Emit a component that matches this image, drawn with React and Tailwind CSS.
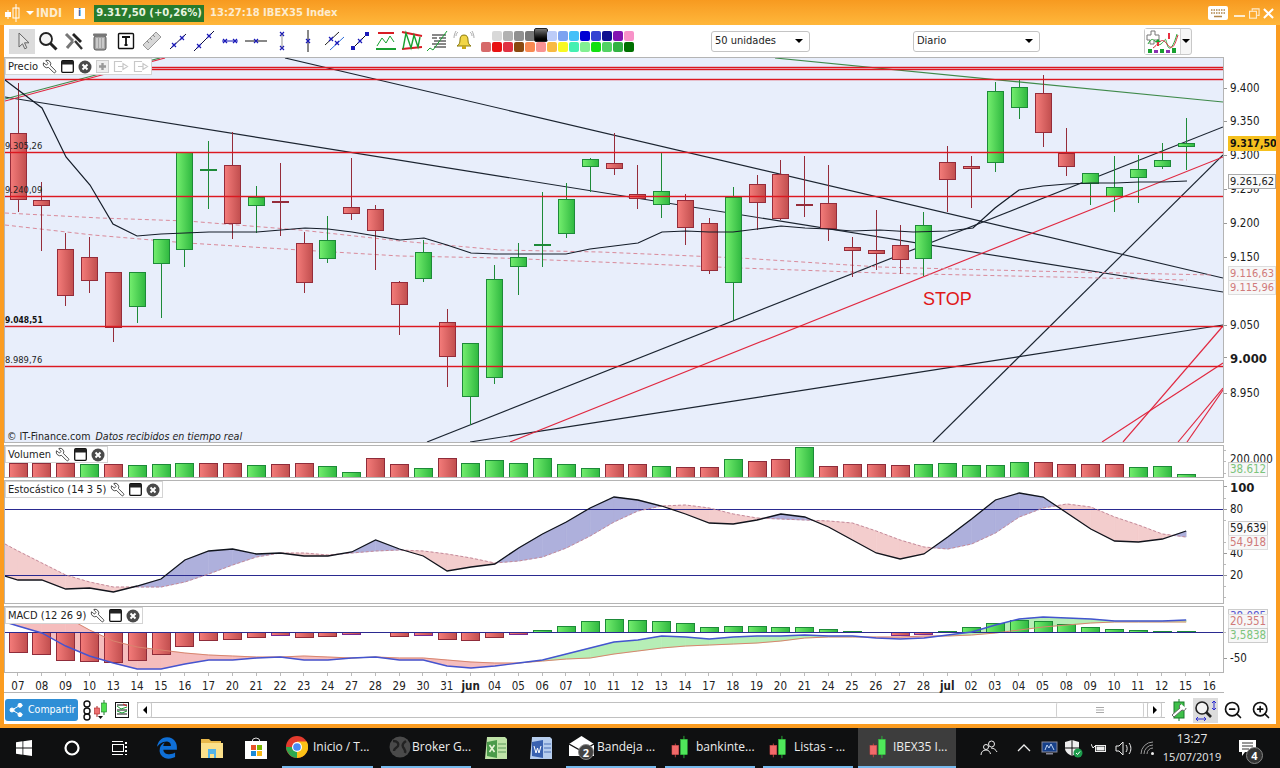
import React from 'react';
import { Wrench, ZoomIn, ZoomOut, Share2 } from 'lucide-react';
import { FaEdgeLegacy } from 'react-icons/fa6';

const xs = i => 18 + 23.84 * i;
const labels = ['07','08','09','10','13','14','15','16','17','20','21','22','23','24','27','28','29','30','31','jun','04','05','06','07','10','11','12','13','14','17','18','19','20','21','24','25','26','27','28','jul','02','03','04','05','08','09','10','11','12','15','16'];

// [color, wickTop, wickBottom, bodyTop, bodyBottom]
const candles = [
['r',83,212,133,199],['r',182,251,200,205],['r',233,306,249,295],['r',237,293,257,280],['r',272,342,272,327],
['g',272,323,272,306],['g',239,318,239,263],['g',152,267,152,249],['g',141,209,169,170],['r',132,239,165,223],
['g',186,233,197,205],['r',163,236,201,202],['r',232,293,243,282],['g',216,263,240,258],['r',158,220,207,213],
['r',205,270,209,230],['r',281,335,282,304],['g',240,282,252,278],['r',309,387,322,356],['g',343,425,343,396],
['g',265,384,279,377],['g',243,295,257,266],['g',192,267,244,245],['g',183,238,199,233],['g',158,192,159,166],
['r',133,175,163,168],['r',165,209,194,198],['g',153,218,191,204],['r',194,245,200,227],['r',218,274,223,270],
['g',187,320,197,282],['r',175,230,184,202],['r',160,220,174,218],['r',156,217,204,205],['r',165,241,203,228],
['r',237,277,247,250],['r',210,270,250,253],['r',225,274,245,259],['g',212,276,225,258],['r',146,212,162,179],
['r',156,208,166,168],['g',82,172,91,162],['g',80,119,87,107],['r',75,147,93,132],['r',128,176,153,166],
['g',173,205,173,183],['g',156,212,187,196],['g',155,203,169,177],['g',143,169,160,166],['g',118,170,143,146],
];
const ma = [[5,80],[42,108],[66,157],[90,185],[113,224],[137,236],[161,234],[185,233],[209,232],[233,232],[257,232],[281,230],[305,228],[328,229],[352,232],[376,236],[400,240],[424,238],[447,245],[471,253],[495,254],[518,254],[542,254],[566,254],[590,249],[614,246],[638,243],[662,232],[686,231],[709,232],[733,232],[757,229],[781,226],[805,228],[828,229],[852,231],[880,230],[913,232],[948,231],[973,228],[995,208],[1019,190],[1043,186],[1067,184],[1091,183],[1115,183],[1139,182],[1163,182],[1187,181]];
const dash1 = [[5,213],[100,218],[187,221],[300,230],[400,241],[500,250],[600,252],[740,258],[880,267],[1030,271],[1213,275]];
const dash2 = [[5,225],[93,235],[187,243],[300,250],[400,256],[500,258],[600,262],[740,268],[880,273],[1187,280]];
const hLines = [67,69,79,152,196,326,366];
const segs = [
['#1b2430',285,58,1223,278],['#1b2430',5,97,1223,292],['#1b2430',427,442,1223,127],['#1b2430',470,442,1223,325],['#1b2430',933,442,1223,155],
['#e02840',510,442,1223,157],['#3f8a4a',775,58,1223,102],['#3f8a4a',5,99,160,58],['#e02840',5,101,165,58],
['#e02840',1123,442,1223,326],['#e02840',1102,442,1223,363],['#e02840',1178,442,1223,388],['#e02840',1187,442,1223,390],
];
const volTop = [463,463,463,464,464,465,464,463,463,463,465,464,463,466,472,458,464,468,458,463,460,463,458,464,468,464,464,466,467,467,459,461,459,447,466,464,464,465,464,463,465,465,462,462,464,464,464,467,466,474];
const volCol = 'rrrgrgggrrgrrggrrgrggggggrrgrrgrrgrrrrgggggrrrrggg'.split('');
const macdBars = [652,654,660,661,662,660,654,646,640,639,637,635,637,636,634,632,636,635,639,640,637,634,630,626,621,619,620,621,623,627,626,626,627,627,629,631,632,635,634,631,627,623,620,621,624,627,629,630,631,631];
const kLine = [580,580,589,588,592,586,579,560,551,549,554,553,556,556,552,540,549,556,571,567,564,548,534,522,508,497,500,506,514,523,524,520,514,517,527,540,553,559,554,537,519,500,493,497,513,529,541,542,539,531];
const dLine = [551,563,575,582,587,587,587,582,574,565,557,553,553,555,553,551,550,551,554,558,563,561,557,548,536,522,511,506,505,508,514,518,519,520,521,523,531,540,547,549,544,533,517,508,504,507,517,525,534,537];
const macdLine = [626,633,646,656,663,669,669,664,660,660,658,657,660,660,658,657,660,660,666,668,666,663,660,654,648,642,640,636,637,639,637,636,636,635,636,636,638,639,638,635,632,625,619,617,618,619,621,621,621,620];
const sigLine = [600,606,617,630,641,647,650,653,655,656,657,657,656,657,658,657,658,658,660,662,663,663,661,659,658,654,651,648,646,645,644,643,641,638,637,637,637,637,636,636,635,633,630,627,625,623,622,622,622,622];

const withLead = (arr, lead) => [[5, lead], ...arr.map((y, i) => [xs(i), y])];
const pts = a => a.map(p => p.join(',')).join(' ');

function bandPolys(a, b, colA, colB) {
  const out = [];
  for (let i = 0; i < a.length - 1; i++) {
    const [x0, a0] = a[i], [x1, a1] = a[i + 1];
    const b0 = b[i][1], b1 = b[i + 1][1];
    const d0 = a0 - b0, d1 = a1 - b1;
    if (d0 * d1 >= 0) {
      out.push([`${x0},${a0} ${x1},${a1} ${x1},${b1} ${x0},${b0}`, d0 + d1 < 0 ? colA : colB]);
    } else {
      const t = d0 / (d0 - d1), xc = x0 + (x1 - x0) * t, yc = a0 + (a1 - a0) * t;
      out.push([`${x0},${a0} ${xc},${yc} ${x0},${b0}`, d0 < 0 ? colA : colB]);
      out.push([`${xc},${yc} ${x1},${a1} ${x1},${b1}`, d1 < 0 ? colA : colB]);
    }
  }
  return out;
}

const Defs = () => (
  <defs>
    <linearGradient id="gg" x1="0" x2="1" y1="0" y2="0"><stop offset="0" stopColor="#74ee6e" /><stop offset="1" stopColor="#2fb840" /></linearGradient>
    <linearGradient id="gr" x1="0" x2="1" y1="0" y2="0"><stop offset="0" stopColor="#f47c7a" /><stop offset="1" stopColor="#c14e4e" /></linearGradient>
  </defs>
);

function PriceChart() {
  return (
    <svg width="1218" height="384" viewBox="5 58 1218 384" className="block">
      <Defs />
      {segs.map((s, i) => <line key={i} x1={s[1]} y1={s[2]} x2={s[3]} y2={s[4]} stroke={s[0]} strokeWidth="1.150" />)}
      <polyline points={pts(dash1)} fill="none" stroke="#d98a9a" strokeDasharray="4 3" />
      <polyline points={pts(dash2)} fill="none" stroke="#d98a9a" strokeDasharray="4 3" />
      {candles.map((c, i) => {
        const x = Math.floor(xs(i));
        const g = c[0] === 'g';
        const line = g ? '#1d8a38' : '#952c3a';
        return (
          <g key={i} shapeRendering="crispEdges">
            <line x1={x + .5} x2={x + .5} y1={c[1]} y2={c[2]} stroke={line} />
            {c[4] - c[3] < 2
              ? <rect x={x - 8} y={c[3]} width="17" height="2" fill={line} />
              : <rect x={x - 8 + .5} y={c[3] + .5} width="16" height={c[4] - c[3]} fill={g ? 'url(#gg)' : 'url(#gr)'} stroke={line} />}
          </g>
        );
      })}
      {hLines.map(y => (
        <g key={y} shapeRendering="crispEdges">
          <line x1="5" x2="1223" y1={y + .5} y2={y + .5} stroke="#dc1820" strokeOpacity=".22" strokeWidth="3" />
          <line x1="5" x2="1223" y1={y + .5} y2={y + .5} stroke="#dc1820" />
        </g>
      ))}
      <polyline points={pts(ma)} fill="none" stroke="#141c28" strokeWidth="1.200" />
    </svg>
  );
}

function VolumeChart() {
  return (
    <svg width="1218" height="31" viewBox="5 446 1218 31" className="block">
      <Defs />
      {volTop.map((t, i) => {
        const x = Math.floor(xs(i));
        const g = volCol[i] === 'g';
        return <rect key={i} shapeRendering="crispEdges" x={x - 9 + .5} y={t + .5} width="18" height={480 - t} fill={g ? 'url(#gg)' : 'url(#gr)'} stroke={g ? '#1d8a38' : '#8f2c3a'} />;
      })}
    </svg>
  );
}

function StochChart() {
  const k = withLead(kLine, 576), d = withLead(dLine, 544);
  return (
    <svg width="1218" height="122" viewBox="5 481 1218 122" className="block">
      {bandPolys(d, k, '#f3cdcd', '#aeb0dc').map((p, i) => <polygon key={i} points={p[0]} fill={p[1]} stroke={p[1]} strokeWidth=".6" />)}
      <line x1="5" x2="1223" y1="509.5" y2="509.5" stroke="#2a2a90" shapeRendering="crispEdges" />
      <line x1="5" x2="1223" y1="575.5" y2="575.5" stroke="#2a2a90" shapeRendering="crispEdges" />
      <polyline points={pts(d)} fill="none" stroke="#c48a9a" strokeDasharray="3 2" />
      <polyline points={pts(k)} fill="none" stroke="#10141c" strokeWidth="1.300" />
    </svg>
  );
}

function MacdChart() {
  const m = withLead(macdLine, 622), s = withLead(sigLine, 596);
  return (
    <svg width="1218" height="65" viewBox="5 607 1218 65" className="block">
      <Defs />
      {bandPolys(s, m, '#f5bdbd', '#b6eeb6').map((p, i) => <polygon key={i} points={p[0]} fill={p[1]} stroke={p[1]} strokeWidth=".6" />)}
      {macdBars.map((t, i) => {
        const x = Math.floor(xs(i));
        if (t === 632) return null;
        const up = t < 632;
        const small = !up && t <= 635;
        const y = up ? t : 632;
        const h = Math.abs(t - 632);
        return <rect key={i} shapeRendering="crispEdges" x={x - 9 + .5} y={y + .5} width="18" height={h} fill={up ? 'url(#gg)' : 'url(#gr)'} stroke={up ? '#1d8a38' : small ? '#7a2a90' : '#8f2c3a'} />;
      })}
      <polyline points={pts(s)} fill="none" stroke="#d8856e" />
      <line x1="5" x2="1223" y1="632.5" y2="632.5" stroke="#2a2a90" shapeRendering="crispEdges" />
      <polyline points={pts(m)} fill="none" stroke="#4454d0" strokeWidth="1.400" />
    </svg>
  );
}

const WindowGlyph = () => (
  <svg width="13" height="13" viewBox="0 0 13 13" className="shrink-0"><rect x=".7" y=".7" width="11.600" height="11.600" rx="1" fill="#fff" stroke="#111" strokeWidth="1.300" /><rect x="1" y="1" width="11" height="3.500" fill="#222" /></svg>
);
const CloseGlyph = () => (
  <svg width="14" height="14" viewBox="0 0 14 14" className="shrink-0"><circle cx="7" cy="7" r="6.500" fill="#4a4a4a" /><path d="M4.500 4.500l5 5M9.500 4.500l-5 5" stroke="#fff" strokeWidth="2" /></svg>
);
function Legend({ name, extra, className }) {
  return (
    <div className={`absolute left-0 top-0 flex items-center gap-[4px] bg-white border border-[#d4d4d4] pl-[2px] pr-[2px] text-[11px] leading-none text-[#222] whitespace-nowrap ${className}`}>
      <span>{name}</span>
      <Wrench size={15} strokeWidth={1.200} color="#111" className="-scale-x-100 shrink-0" />
      <WindowGlyph />
      <CloseGlyph />
      {extra}
    </div>
  );
}
const PrecioExtra = () => (
  <>
    <svg width="13" height="13" viewBox="0 0 13 13"><rect x=".5" y=".5" width="12" height="12" fill="#eee" stroke="#ccc" /><path d="M6.500 3v7M3 6.500h7" stroke="#999" strokeWidth="2.400" /></svg>
    {[0, 1].map(i => (
      <svg key={i} width="16" height="13" viewBox="0 0 16 13"><path d="M9 1.500H1.500v10H9M5 6.500h5M10 3.500v6l4.500-3z" fill="none" stroke="#c8c8c8" strokeWidth="1.200" /></svg>
    ))}
  </>
);

function AxisText({ y, top, children, bold, tick = true }) {
  return (
    <>
      {tick && <div className="absolute left-0 w-[3px] h-px bg-[#999]" style={{ top: y - top }} />}
      <div className={`absolute left-[6px] -translate-y-1/2 whitespace-nowrap leading-none ${bold ? 'font-bold text-[13px]' : 'text-[11.5px]'} text-[#1c1c1c]`} style={{ top: y - top + 1 }}>{children}</div>
    </>
  );
}
function AxisBox({ y, top, children, className }) {
  return (
    <div className={`absolute left-[4px] h-[15px] px-[1px] flex items-center border leading-none whitespace-nowrap ${className}`} style={{ top: y - top }}>{children}</div>
  );
}
const MinorTicks = ({ list, top }) => list.map(y => <div key={y} className="absolute left-0 w-[2px] h-px bg-[#bbb]" style={{ top: y - top }} />);

function ChartText({ x, y, className, children }) {
  return <div className={`absolute -translate-y-1/2 whitespace-nowrap leading-none ${className}`} style={{ left: x - 5, top: y - 58 }}>{children}</div>;
}

function Pane({ h, children, axis, legend }) {
  return (
    <div className="flex shrink-0">
      <div className="relative w-[1220px] border border-[#b4b4b4] overflow-hidden">{children}{legend}</div>
      <div className="relative w-[52px] overflow-hidden" style={{ height: h }}>{axis}</div>
    </div>
  );
}

const Xm = ({ x, y, s = 2, c = '#1a1ab8' }) => <path d={`M${x - s} ${y - s}l${2 * s} ${2 * s}M${x + s} ${y - s}l${-2 * s} ${2 * s}`} stroke={c} strokeWidth="1.200" fill="none" />;
const Tool = ({ children, active }) => (
  <div className={`w-[26px] h-[25px] flex items-center justify-center shrink-0 ${active ? 'bg-[#dcdcdc]' : ''}`}>
    <svg width="22" height="22" viewBox="0 0 22 22">{children}</svg>
  </div>
);

function ToolbarIcons() {
  return (
    <>
      <Tool active><path d="M8 3v14l3.500-3.200 2.300 5 2-1-2.300-5H18z" fill="#e4e4e4" stroke="#666" /></Tool>
      <Tool><circle cx="9" cy="9" r="6" fill="#f4f4f4" stroke="#222" strokeWidth="1.800" /><path d="M13.500 13.500l6 6" stroke="#222" strokeWidth="3" /></Tool>
      <Tool><path d="M3 4l7 7M10 11l-6 7" stroke="#777" strokeWidth="3" /><path d="M11 3l8 8-2 2-8-8z" fill="#222" /><path d="M12 11l7 8" stroke="#333" strokeWidth="2.400" /></Tool>
      <Tool><rect x="5" y="6" width="12" height="14" rx="2" fill="#a4a4a4" stroke="#555" /><path d="M8 8v10M11 8v10M14 8v10" stroke="#eee" /><rect x="4" y="3.500" width="14" height="2.500" rx="1" fill="#777" /></Tool>
      <Tool><rect x="3.500" y="3.500" width="15" height="15" rx="1" fill="#fff" stroke="#111" strokeWidth="1.400" /><path d="M7 7h8M11 7v8M9.500 15h3" stroke="#111" strokeWidth="1.800" /></Tool>
      <Tool><path d="M2 15L15 2l5 5L7 20z" fill="#d8d8d8" stroke="#999" /><path d="M6 11l2 2M9 8l2 2M12 5l2 2" stroke="#888" /></Tool>
      <Tool><path d="M3 19L19 4" stroke="#101040" /><Xm x={7} y={15} /><Xm x={15} y={8} /></Tool>
      <Tool><path d="M1 21L21 1" stroke="#101040" /><Xm x={6} y={16} /><Xm x={16} y={6} /></Tool>
      <Tool><Xm x={6} y={11} /><Xm x={16} y={11} /><path d="M3 11h16" stroke="#1a1ab8" /></Tool>
      <Tool><path d="M0 11h22" stroke="#111" /><Xm x={11} y={11} /></Tool>
      <Tool><Xm x={11} y={4} /><Xm x={11} y={18} /><path d="M11 4v14" stroke="#666" strokeWidth=".7" /></Tool>
      <Tool><path d="M11 0v22" stroke="#111" /><Xm x={11} y={11} /></Tool>
      <Tool><path d="M2 15L16 2" stroke="#222" /><path d="M7 20L21 7" stroke="#2a6ad8" /><Xm x={8} y={9} /><Xm x={14} y={13} /></Tool>
      <Tool><path d="M4 18L18 4" stroke="#111" /><rect x="2" y="16" width="4" height="4" fill="#1a1ab8" /><rect x="16" y="2" width="4" height="4" fill="#1a1ab8" /><Xm x={11} y={11} /></Tool>
      <Tool><rect x="3" y="2" width="16" height="2" fill="#d81c24" /><rect x="1" y="18" width="20" height="2" fill="#18a030" /><path d="M2 16l5-8 4 5 4-7 4 6" fill="none" stroke="#18a030" /></Tool>
      <Tool><path d="M1 2l20 4M1 19l20-2" stroke="#d81c24" strokeWidth="2" /><path d="M2 19L5 3l5 15 3-13 4 12 2-10" fill="none" stroke="#18a030" strokeWidth="1.400" /></Tool>
      <Tool><path d="M5 5h14M5 8h5M12 8h7M7 11h12M5 14h14M7 17h12" stroke="#111" /><path d="M0 21l3-3 3 2 14-19" fill="none" stroke="#18a030" /></Tool>
      <Tool><path d="M11 5c-3 0-4 2-4 5 0 3-1 5-3 6h14c-2-1-3-3-3-6 0-3-1-5-4-5z" fill="#f2d648" stroke="#8a7a10" /><rect x="9" y="16" width="4" height="3" fill="#c8a818" /><path d="M3 6c0-2 1-3 2-4M19 6c0-2-1-3-2-4M1 8c0-3 1-5 2-7M21 8c0-3-1-5-2-7" stroke="#888" fill="none" strokeWidth=".7" /></Tool>
    </>
  );
}

const top = ['#d8d8d8', '#b2b2b2', '#909090', '#787878', '#000', '#bcccf8', '#7ca2f0', '#44c0f8', '#0000d4', '#3442d2', '#0e0e90', '#8212b2', '#f892c8'];
const bot = ['#d66a6a', '#e81212', '#e03242', '#8a4a10', '#f88a52', '#f89292', '#f8ba42', '#f8f822', '#44f0b2', '#82f092', '#12e012', '#52d262', '#32b242', '#007000'];
function Palette() {
  return (
    <div className="ml-[3px] w-[154px] shrink-0 flex flex-col gap-[1px]">
      <div className="flex pl-[11px]">
        {top.map((c, i) => (
          <div key={i} className="relative w-[11px] h-[10px] flex justify-center">
            {i === 4
              ? <div className="absolute -top-[3px] w-[14px] h-[14px] rounded-[2px] border border-[#222] bg-linear-to-b from-[#777] to-black" />
              : <div className="w-[10px] h-[10px] rounded-[2px]" style={{ background: c }} />}
          </div>
        ))}
      </div>
      <div className="flex">
        {bot.map((c, i) => <div key={i} className="w-[11px] h-[10px] flex justify-center"><div className="w-[10px] h-[10px] rounded-[2px]" style={{ background: c }} /></div>)}
      </div>
    </div>
  );
}
function Select({ label, className }) {
  return (
    <div className={`h-[21px] shrink-0 flex items-center justify-between px-[3px] pr-[6px] bg-white border border-[#c4c4c4] rounded-[3px] text-[11px] text-[#222] ${className}`}>
      <span className="pt-[1px]">{label}</span>
      <span className="w-0 h-0 border-x-[4px] border-x-transparent border-t-[4px] border-t-black" />
    </div>
  );
}

function Candle() {
  return (
    <svg width="21" height="24" viewBox="0 0 22 28" className="shrink-0">
      <path d="M5 10v16" stroke="#c44" /><rect x="1" y="12" width="8" height="11" fill="#f26a6a" stroke="#c44" strokeWidth=".5" />
      <path d="M15 1v26" stroke="#2bbf3a" /><rect x="11" y="5" width="8" height="18" fill="#4fe85a" stroke="#2bbf3a" strokeWidth=".5" />
    </svg>
  );
}
const TaskItem = ({ icon, label, className }) => (
  <div className={`flex items-center h-full shrink-0 border-b-2 border-[#76b9ed] ${className}`}>
    {icon}
    <span className="text-[12px] text-[#ededed] whitespace-nowrap">{label}</span>
  </div>
);

function Taskbar() {
  return (
    <div className="h-[40px] shrink-0 bg-[#0f1011] flex items-stretch font-['Open_Sans',sans-serif]">
      <div className="w-[48px] shrink-0 flex items-center justify-center">
        <svg width="16" height="16" viewBox="0 0 16 16" fill="#fff"><path d="M0 2.200l6.500-.9v6.300H0zM7.300 1.200L16 0v7.600H7.300zM0 8.400h6.500v6.300L0 13.800zM7.300 8.400H16V16l-8.700-1.200z" /></svg>
      </div>
      <div className="w-[48px] shrink-0 flex items-center justify-center">
        <svg width="16" height="16" viewBox="0 0 16 16"><circle cx="8" cy="8" r="6.500" fill="none" stroke="#fff" strokeWidth="2.200" /></svg>
      </div>
      <div className="w-[48px] shrink-0 flex items-center justify-center">
        <svg width="17" height="15" viewBox="0 0 17 15" fill="none" stroke="#fff"><rect x=".5" y="3.500" width="11" height="7" /><path d="M0 .5h11M0 13.500h11" /><path d="M14 1v2M14 5v2M14 9v2M14 13v1" strokeWidth="2" /></svg>
      </div>
      <div className="w-[46px] shrink-0 flex items-center justify-center"><FaEdgeLegacy size={22} color="#0f6fd6" /></div>
      <div className="w-[44px] shrink-0 flex items-center justify-center">
        <svg width="22" height="20" viewBox="0 0 22 20"><path d="M0 1h8l2 2h10v3H0z" fill="#e8b84a" /><rect x="0" y="5" width="22" height="15" fill="#fbe08a" /><rect x="7" y="11" width="8" height="5" fill="#54b4e8" /><path d="M8 16v4M14 16v4" stroke="#54b4e8" strokeWidth="2" /></svg>
      </div>
      <div className="w-[44px] shrink-0 flex items-center justify-center">
        <svg width="24" height="24" viewBox="0 0 24 24"><path d="M8 6a4 4 0 018 0" fill="none" stroke="#ddd" /><rect x="1" y="5" width="22" height="18" fill="#fff" /><rect x="7" y="9" width="5" height="5" fill="#e8542a" /><rect x="13" y="9" width="5" height="5" fill="#7ab800" /><rect x="7" y="15" width="5" height="5" fill="#1a8ad8" /><rect x="13" y="15" width="5" height="5" fill="#f8b818" /></svg>
      </div>
      <TaskItem className="w-[91px] ml-[4px] pl-[4px] gap-[5px]" label="Inicio / T..." icon={
        <svg width="22" height="22" viewBox="0 0 24 24" className="shrink-0"><circle cx="12" cy="12" r="12" fill="#e33b2e" /><path d="M12 12L2 18A12 12 0 0012 24z" fill="#2da94f" /><path d="M12 12l-10 6A12 12 0 010 12z" fill="#2da94f" /><path d="M12 6h10.500A12 12 0 0112 24z" fill="#fbc116" /><circle cx="12" cy="12" r="5.500" fill="#fff" /><circle cx="12" cy="12" r="4.200" fill="#4a8af4" /></svg>} />
      <TaskItem className="w-[90px] ml-[8px] pl-[8px] gap-[1px]" label="Broker G..." icon={
        <svg width="22" height="22" viewBox="0 0 22 22" className="shrink-0"><circle cx="11" cy="11" r="10.500" fill="#4a4a4a" /><path d="M4 5c5 0 6 3 5 5s-4 2-4 5M17 5c-3 2-4 4-3 6s3 3 2 6" fill="none" stroke="#222" strokeWidth="2.400" /></svg>} />
      <div className="w-[44px] ml-[2px] shrink-0 flex items-center justify-center">
        <svg width="23" height="23" viewBox="0 0 23 23"><path d="M3 0h18l2 2v20H1z" fill="#bfe3a8" /><path d="M3 5l10-2v18L3 19z" fill="#4a9a4a" /><path d="M5.500 8l5 7M10.500 8l-5 7" stroke="#e8f4d8" strokeWidth="1.600" /><path d="M14 7h8M14 11h8M14 15h8" stroke="#5a9a5a" /></svg>
      </div>
      <div className="w-[44px] ml-[1px] shrink-0 flex items-center justify-center">
        <svg width="23" height="23" viewBox="0 0 23 23"><path d="M3 0h18l2 2v20H1z" fill="#b6cdee" /><path d="M3 5l11-2v18L3 19z" fill="#3a62b0" /><path d="M5 9l2 7 1.500-5 1.500 5 2-7" fill="none" stroke="#fff" /><path d="M15 7h7M15 11h7M15 15h7" stroke="#4a70b8" /></svg>
      </div>
      <TaskItem className="w-[90px] ml-[4px] pl-[3px] gap-[3px]" label="Bandeja ..." icon={
        <div className="relative flex shrink-0">
          <svg width="25" height="22" viewBox="0 0 25 22"><path d="M0 8L12.500 0 25 8v12H0z" fill="#fff" /><path d="M0 8l12.500 7L25 8" fill="none" stroke="#111" strokeWidth="1.400" /></svg>
          <span className="absolute left-[9px] top-[8px] w-[16px] h-[16px] rounded-full bg-[#444] border border-[#888] text-white text-[11px] font-bold leading-none flex items-center justify-center">2</span>
        </div>} />
      <TaskItem className="w-[90px] ml-[9px] pl-[5px] gap-[5px]" label="bankinte..." icon={<Candle />} />
      <TaskItem className="w-[90px] ml-[8px] pl-[5px] gap-[5px]" label="Listas - ..." icon={<Candle />} />
      <TaskItem className="w-[98px] ml-[5px] pl-[10px] gap-[4px] bg-[#3d3d3d]" label="IBEX35 I..." icon={<Candle />} />
      <div className="w-[66px] shrink-0 flex items-center justify-center">
        <svg width="18" height="18" viewBox="0 0 18 18" fill="none" stroke="#eee"><circle cx="11.500" cy="5" r="3" /><circle cx="6" cy="8" r="2.500" /><path d="M1 16c0-3 2-5 5-5s4 2 4.500 4M11 9c3 0 5 2 6 4" /></svg>
      </div>
      <div className="-ml-[11px] w-[26px] shrink-0 flex items-center justify-center">
        <svg width="14" height="8" viewBox="0 0 14 8" fill="none" stroke="#eee" strokeWidth="1.300"><path d="M1 7l6-6 6 6" /></svg>
      </div>
      <div className="w-[24px] shrink-0 flex items-center justify-center"><svg width="17" height="15" viewBox="0 0 17 15"><rect x="1" y="1" width="15" height="10" fill="#16408a" stroke="#889" /><path d="M4 9l2-5 2 3 2-4 3 6" fill="none" stroke="#bfd4f4" /><rect x="5" y="12" width="7" height="1.500" fill="#889" /></svg></div>
      <div className="w-[25px] shrink-0 flex items-center justify-center"><svg width="18" height="19" viewBox="0 0 18 19"><path d="M7 1l7 2v6c0 4-3 6-7 8-4-2-7-4-7-8V3z" fill="#eee" /><path d="M7 1v16M0 9h14" stroke="#111" /><circle cx="13" cy="14" r="4.500" fill="#1c9c4c" /><path d="M11 14l1.500 1.500 2.500-3" fill="none" stroke="#fff" /></svg></div>
      <div className="w-[25px] shrink-0 flex items-center justify-center"><svg width="16" height="12" viewBox="0 0 16 12" fill="none" stroke="#eee"><rect x="4.500" y="3.500" width="10" height="6" /><path d="M0 2l2 4 2-2" /><rect x="6" y="5" width="7" height="3" fill="#eee" /></svg></div>
      <div className="w-[24px] shrink-0 flex items-center justify-center"><svg width="17" height="15" viewBox="0 0 17 15" fill="none" stroke="#eee"><path d="M1 5h3l4-4v13l-4-4H1zM11 4c1.500 2 1.500 5 0 7M14 2c2.500 3 2.500 8 0 11" /></svg></div>
      <div className="w-[25px] shrink-0 flex items-center justify-center"><svg width="15" height="14" viewBox="0 0 15 14" fill="none" stroke="#999"><path d="M1 13a12 12 0 0112-12M4 13a9 9 0 019-9M7 13a6 6 0 016-6" /><circle cx="12.500" cy="12.500" r="1.500" fill="#eee" stroke="none" /></svg></div>
      <div className="w-[64px] shrink-0 flex flex-col items-center justify-center text-[11px] leading-[18px] text-[#e8e8e8]">
        <span className="text-[12px]">13:27</span>
        <span>15/07/2019</span>
      </div>
      <div className="ml-[15px] relative w-[28px] shrink-0 pt-[12px]">
        <svg width="17" height="16" viewBox="0 0 17 16" className="block"><path d="M0 0h17v12H6l-3 4v-4H0z" fill="#fff" /><path d="M3 3h11M3 6h11M3 9h7" stroke="#333" /></svg>
        <span className="absolute left-[7px] top-[19px] w-[17px] h-[17px] rounded-full bg-[#333] border border-[#888] text-white text-[11px] font-bold leading-none flex items-center justify-center">4</span>
      </div>
    </div>
  );
}

export default function App() {
  return (
    <div className="w-[1280px] h-[768px] flex flex-col overflow-hidden font-['DejaVu_Sans_Condensed','Noto_Sans',sans-serif] bg-[#0f1011]">
      <div className="h-[728px] shrink-0 flex flex-col bg-[#fb9c20]">
        {/* Title bar */}
        <div className="h-[25px] shrink-0 flex items-center pl-[5px] pr-[6px] pt-[1px] bg-linear-to-b from-[#f79a20] to-[#ffb73a] text-[#fdeccf] font-bold text-[12px]">
          <svg width="16" height="18" viewBox="0 0 16 18" className="shrink-0"><path d="M3 6v9" stroke="#fff" /><rect x="0" y="8" width="6" height="5" fill="#fff" /><path d="M11 0v18" stroke="#fff" /><rect x="8" y="4" width="6" height="10" fill="none" stroke="#fff" /></svg>
          <span className="ml-[5px] w-0 h-0 border-x-[4px] border-x-transparent border-t-[4px] border-t-white shrink-0" />
          <span className="ml-[2px] w-[38px]">INDI</span>
          <span className="w-[11px] h-[11px] bg-white flex items-center justify-center text-[#3a6ca8] text-[10px] leading-none font-bold shrink-0">i</span>
          <span className="ml-[9px] w-[110px] h-[17px] bg-[#287a2c] text-[#e8f4e0] text-[11.2px] leading-none flex items-center justify-center whitespace-nowrap shrink-0">9.317,50 (+0,26%)</span>
          <span className="ml-[6px] text-[11.1px] whitespace-nowrap">13:27:18 IBEX35 Index</span>
          <div className="ml-auto flex items-center">
            <svg width="20" height="14" viewBox="0 0 20 14"><rect width="20" height="14" rx="2" fill="#fff" /><path d="M3 4h14M3 7h14" stroke="#b0864a" strokeDasharray="1.500 1" strokeWidth="1.500" /><path d="M6 10.500h8" stroke="#b0864a" strokeWidth="1.500" /></svg>
            <svg width="11" height="10" viewBox="0 0 11 10" className="ml-[6px]"><rect y="7" width="11" height="2" fill="#fdeccf" /></svg>
            <svg width="11" height="11" viewBox="0 0 12 12" fill="none" stroke="#fdeccf" strokeWidth="1.200" className="ml-[4px]"><rect x=".6" y="3.600" width="7.500" height="7.500" /><path d="M3.500 3V1h7.500v7H9" /></svg>
            <svg width="11" height="11" viewBox="0 0 12 12" stroke="#fff" strokeWidth="2.200" className="ml-[3px]"><path d="M1 1l10 10M11 1L1 11" /></svg>
          </div>
        </div>

        {/* White window body */}
        <div className="mx-[4px] h-[699px] bg-white flex flex-col">
          {/* Toolbar */}
          <div className="h-[32px] shrink-0 flex items-center pl-[5px]">
            <ToolbarIcons />
            <Palette />
            <Select label="50 unidades" className="ml-[77px] w-[99px]" />
            <Select label="Diario" className="ml-[103px] w-[127px]" />
            <div className="ml-[104px] w-[48px] h-[27px] shrink-0 flex border border-[#c8c8c8] rounded-[3px] bg-[#f6f6f6]">
              <svg width="35" height="25" viewBox="0 0 35 25" className="shrink-0 bg-white">
                <path d="M2 6h4V2h4v4h4v5H9v4H5v-4H2z" fill="#fff" stroke="#777" />
                <path d="M3 15c6-12 8 4 13 0s4-8 6 0 6 4 10-10" fill="none" stroke="#2aa83a" />
                <path d="M8 19c6-4 8-12 14-4s8 0 11-9" fill="none" stroke="#d83040" />
                <path d="M13 17V12M24 4v6" stroke="#e83040" strokeWidth="2" />
                <path d="M13 10l-3 3h6z" fill="#18a030" />
                <rect x="3" y="20" width="4" height="4" fill="#18a030" /><rect x="9" y="21" width="4" height="3" fill="#8a30b0" /><rect x="15" y="20" width="4" height="4" fill="#18a030" /><rect x="21" y="21" width="4" height="3" fill="#8a30b0" /><rect x="27" y="19" width="4" height="5" fill="#18a030" />
              </svg>
              <div className="flex-1 border-l border-[#d4d4d4] flex items-center justify-center"><span className="w-0 h-0 border-x-[4px] border-x-transparent border-t-[4px] border-t-black" /></div>
            </div>
          </div>

          {/* Price pane */}
          <Pane h={386}
            legend={<Legend name="Precio" extra={<PrecioExtra />} className="h-[17px]" />}
            axis={
              <>
                <AxisText y={88} top={57}>9.400</AxisText>
                <AxisText y={121} top={57}>9.350</AxisText>
                <AxisText y={155} top={57}>9.300</AxisText>
                <AxisText y={189} top={57}>9.250</AxisText>
                <AxisText y={223} top={57}>9.200</AxisText>
                <AxisText y={257} top={57}>9.150</AxisText>
                <AxisText y={325} top={57}>9.050</AxisText>
                <AxisText y={357} top={57} bold>9.000</AxisText>
                <AxisText y={393} top={57}>8.950</AxisText>
                <AxisBox y={136} top={57} className="bg-[#f5c01e] border-[#f5c01e] text-[#111] font-bold text-[10.5px]">9.317,50</AxisBox>
                <AxisBox y={174} top={57} className="bg-[#fafafa] border-[#aaa] text-[#222] text-[11px]">9.261,62</AxisBox>
                <AxisBox y={266} top={57} className="bg-[#f7f7f7] border-[#ddd] text-[#d07a7a] text-[11px]">9.116,63</AxisBox>
                <AxisBox y={280} top={57} className="bg-[#f7f7f7] border-[#ddd] text-[#d07a7a] text-[11px]">9.115,96</AxisBox>
              </>
            }>
            <div className="bg-[#e8eefb]"><PriceChart /></div>
            <ChartText x={5} y={146} className="text-[9.3px] text-[#222]">9.305,26</ChartText>
            <ChartText x={5} y={190} className="text-[9.3px] text-[#222]">9.240,09</ChartText>
            <ChartText x={5} y={320} className="text-[8.5px] font-bold text-[#111]">9.048,51</ChartText>
            <ChartText x={5} y={360} className="text-[9.3px] text-[#222]">8.989,76</ChartText>
            <ChartText x={923} y={299} className="text-[18px] text-[#e01818] font-['Liberation_Sans',sans-serif]">STOP</ChartText>
            <ChartText x={7} y={436} className="text-[10.6px] text-[#222]">© IT-Finance.com <i className="ml-[2px]">Datos recibidos en tiempo real</i></ChartText>
          </Pane>

          {/* Volume */}
          <div className="mt-[2px]">
            <Pane h={33}
              legend={<Legend name="Volumen" className="h-[17px]" />}
              axis={
                <>
                  <MinorTicks list={[450, 461, 473]} top={445} />
                  <AxisText y={459} top={445} tick={false}>200.000</AxisText>
                  <AxisBox y={462} top={445} className="bg-[#f7f7f7] border-[#ccc] text-[#7cc47c] text-[11.5px]">38.612</AxisBox>
                </>
              }>
              <VolumeChart />
            </Pane>
          </div>

          {/* Stochastic */}
          <div className="mt-[2px]">
            <Pane h={124}
              legend={<Legend name="Estocástico (14 3 5)" className="h-[17px]" />}
              axis={
                <>
                  <MinorTicks list={[498, 520, 542, 564, 586, 597]} top={480} />
                  <AxisText y={486} top={480} bold>100</AxisText>
                  <AxisText y={509} top={480}>80</AxisText>
                  <AxisText y={553} top={480}>40</AxisText>
                  <AxisText y={575} top={480}>20</AxisText>
                  <AxisBox y={521} top={480} className="bg-[#fbfbfb] border-[#ccc] text-[#222] text-[11.5px]">59,639</AxisBox>
                  <AxisBox y={535} top={480} className="bg-[#f7f7f7] border-[#ddd] text-[#d07a7a] text-[11.5px]">54,918</AxisBox>
                </>
              }>
              <StochChart />
            </Pane>
          </div>

          {/* MACD */}
          <div className="mt-[2px]">
            <Pane h={67}
              legend={<Legend name="MACD (12 26 9)" className="h-[17px]" />}
              axis={
                <>
                  <AxisText y={658} top={606}>-50</AxisText>
                  <AxisBox y={609} top={606} className="bg-[#f7f7f7] border-[#ccc] text-[#5a5ad0] text-[11.5px]">38,085</AxisBox>
                  <AxisBox y={614} top={606} className="bg-[#f7f7f7] border-[#ddd] text-[#d07a7a] text-[11.5px]">20,351</AxisBox>
                  <AxisBox y={628} top={606} className="bg-[#f7f7f7] border-[#ccc] text-[#7cc47c] text-[11.5px]">3,5838</AxisBox>
                  <MinorTicks list={[632]} top={606} />
                </>
              }>
              <MacdChart />
            </Pane>
          </div>

          {/* Dates */}
          <div className="h-[21px] w-[1220px] shrink-0 -mt-px border-b border-[#b4b4b4] flex pl-[2px] text-[#222]">
            {labels.map((l, i) => (
              <div key={i} className="w-[23.84px] shrink-0 flex flex-col items-center">
                <div className="w-px h-[4px] bg-[#bbb]" />
                <span className={`mt-[5px] text-[11.5px] leading-none ${l.startsWith('ju') ? 'font-bold' : ''}`}>{l}</span>
              </div>
            ))}
          </div>

          {/* Bottom bar */}
          <div className="flex-1 flex items-center pl-[1px] pt-[3px]">
            <div className="w-[73px] h-[22px] shrink-0 flex items-center gap-[4px] pl-[3px] bg-[#2f8fd6] rounded-[3px] text-white text-[10.5px]">
              <Share2 size={16} fill="#fff" strokeWidth={1.500} className="shrink-0" />
              <span>Compartir</span>
            </div>
            <svg width="30" height="22" viewBox="0 0 30 22" className="ml-[4px] shrink-0">
              <circle cx="5" cy="5" r="3" fill="none" stroke="#111" strokeWidth="1.400" /><circle cx="5" cy="12" r="3" fill="none" stroke="#111" strokeWidth="1.400" /><circle cx="5" cy="18" r="3" fill="none" stroke="#111" strokeWidth="1.400" />
              <path d="M15 7v11" stroke="#a22" /><rect x="12.500" y="9" width="5" height="6" fill="#ee7070" stroke="#a22" strokeWidth=".6" />
              <path d="M22 1v15" stroke="#187a28" /><rect x="19.500" y="4" width="5" height="9" fill="#4ee04e" stroke="#187a28" strokeWidth=".6" />
              <path d="M16 17h5l-2.500 3z" fill="#111" />
            </svg>
            <svg width="14" height="16" viewBox="0 0 14 16" className="ml-[3px] shrink-0"><rect x=".5" y=".5" width="13" height="15" fill="#fff" stroke="#111" /><path d="M2 3h10M2 8h10M2 12h10" stroke="#111" /><path d="M2 4l4 3 6-2M2 9l5 2 5-2" stroke="#18a030" fill="none" /><path d="M8 2l4 2" stroke="#d81c24" /></svg>
            <div className="ml-[8px] w-[1028px] h-[16px] shrink-0 flex items-center border-y border-[#c0c0c0]">
              <div className="w-[15px] h-[16px] shrink-0 bg-white border border-[#c8c8c8] rounded-[2px] flex items-center justify-center"><span className="w-0 h-0 border-y-[4px] border-y-transparent border-r-[4px] border-r-black" /></div>
              <div className="flex-1" />
              <div className="w-[88px] h-[16px] shrink-0 border-x border-[#d0d0d0] rounded-[3px] flex items-center justify-center">
                <svg width="8" height="6" viewBox="0 0 8 6" stroke="#aaa"><path d="M0 .5h8M0 3h8M0 5.500h8" /></svg>
              </div>
              <div className="w-[15px] h-[16px] shrink-0 ml-[3px] bg-white border border-[#c8c8c8] rounded-[2px] flex items-center justify-center"><span className="w-0 h-0 border-y-[4px] border-y-transparent border-l-[4px] border-l-black" /></div>
              <div className="w-[3px] shrink-0" />
            </div>
            <svg width="18" height="22" viewBox="0 0 18 22" className="ml-[4px] shrink-0"><path d="M10 0v22" stroke="#187a28" /><rect x="5" y="3" width="10" height="16" fill="#3fc04a" stroke="#187a28" /><path d="M12 5c-2 1-2 3-1 4l-8 7 2 2 8-7c2 1 4 0 4-2" fill="#fff" stroke="#666" /></svg>
            <div className="ml-[6px] w-[25px] h-[25px] shrink-0 bg-[#dcdcdc] flex items-center justify-center">
              <svg width="23" height="23" viewBox="0 0 23 23"><circle cx="8" cy="9" r="6" fill="#f4f4f4" stroke="#222" strokeWidth="1.600" /><path d="M12 13l5 5" stroke="#222" strokeWidth="2.600" /><path d="M20 2v9M18 4l2-2 2 2M18 9l2 2 2-2M2 20h10M4 18l-2 2 2 2M10 18l2 2-2 2" stroke="#2a2ad0" fill="none" /></svg>
            </div>
            <ZoomOut size={20} color="#111" strokeWidth={2} className="ml-[5px] shrink-0" />
            <ZoomIn size={20} color="#111" strokeWidth={2} className="ml-[8px] shrink-0" />
          </div>
        </div>
      </div>
      <Taskbar />
    </div>
  );
}
